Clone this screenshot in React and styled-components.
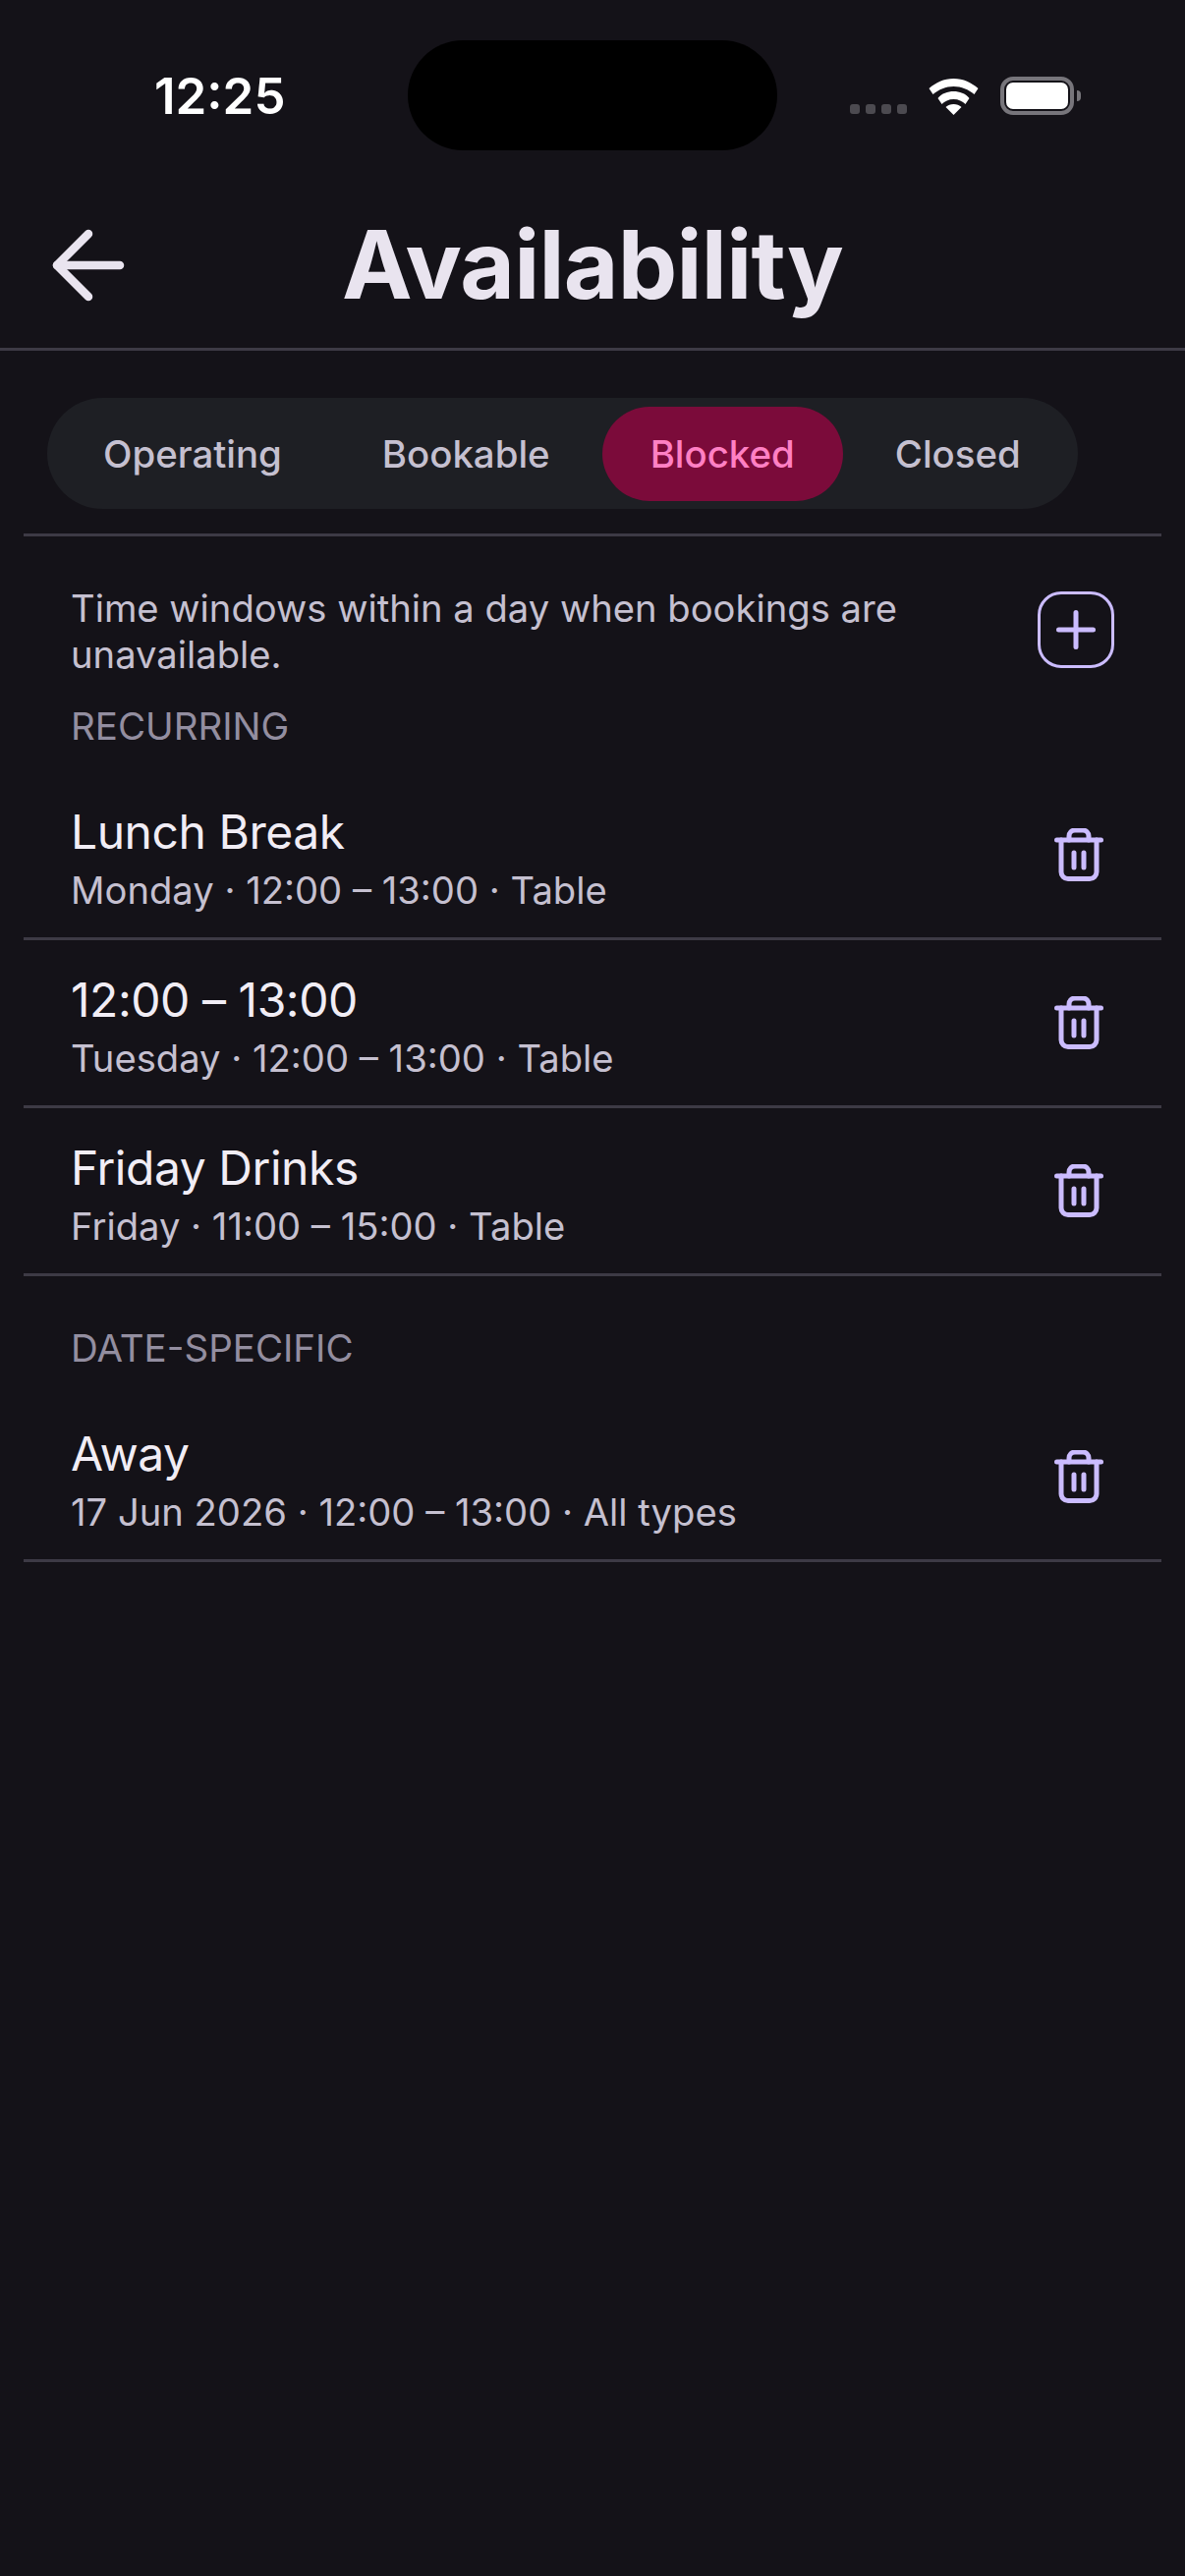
import React from "react";
import styled, { createGlobalStyle } from "styled-components";

const GlobalStyle = createGlobalStyle`
  html, body {
    margin: 0;
    padding: 0;
    background: #141218;
  }
  * {
    box-sizing: border-box;
  }
`;

const tabs = ["Operating", "Bookable", "Blocked", "Closed"];

const recurring = [
  { title: "Lunch Break", sub: "Monday · 12:00 – 13:00 · Table" },
  { title: "12:00 – 13:00", sub: "Tuesday · 12:00 – 13:00 · Table" },
  { title: "Friday Drinks", sub: "Friday · 11:00 – 15:00 · Table" },
];

const dated = [{ title: "Away", sub: "17 Jun 2026 · 12:00 – 13:00 · All types" }];

const TrashIcon = () => (
  <svg width="50" height="54" viewBox="0 0 50 54" fill="none" stroke="#cbbcff" strokeWidth="5" strokeLinecap="round" strokeLinejoin="round">
    <path d="M2.500 12h45" />
    <path d="M15 12V8a6 6 0 0 1 6-6h8a6 6 0 0 1 6 6v4" />
    <path d="M7 12v32.500a7 7 0 0 0 7 7h22a7 7 0 0 0 7-7V12" />
    <path d="M20 25v15M30 25v15" />
  </svg>
);

const Row = ({ title, sub }) => (
  <ItemRow>
    <ItemText>
      <ItemTitle>{title}</ItemTitle>
      <ItemSub>{sub}</ItemSub>
    </ItemText>
    <TrashIcon />
  </ItemRow>
);

const App = () => {
  return (
    <Page>
      <GlobalStyle />
      <StatusBar>
        <Clock>12:25</Clock>
        <Island />
        <StatusIcons>
          <Signal>
            <i />
            <i />
            <i />
            <i />
          </Signal>
          <svg width="51" height="37" viewBox="0 0 50 37" fill="#fff">
            <path d="M25 0C15 0 7 4 0 10l4 6c6-5 13-8 21-8s15 3 21 8l4-6C43 4 35 0 25 0z" />
            <path d="M25 13c-6 0-12 2-16 7l4 6c3-3 7-5 12-5s9 2 12 5l4-6c-4-5-10-7-16-7z" />
            <path d="M25 26c-3 0-6 1-8 3l8 8 8-8c-2-2-5-3-8-3z" />
          </svg>
          <Battery>
            <BatteryFill />
          </Battery>
        </StatusIcons>
      </StatusBar>
      <Header>
        <BackButton>
          <svg width="80" height="80" viewBox="0 0 80 80" fill="none" stroke="#e9e4ef" strokeWidth="8.500" strokeLinecap="round" strokeLinejoin="round">
            <path d="M72 40H8" />
            <path d="M40 8L8 40l32 32" />
          </svg>
        </BackButton>
        <Title>Availability</Title>
      </Header>
      <TabsArea>
        <Tabs>
          {tabs.map((tab) => (
            <Tab key={tab} $active={tab === "Blocked"}>
              {tab}
            </Tab>
          ))}
        </Tabs>
      </TabsArea>
      <Intro>
        <Description>Time windows within a day when bookings are unavailable.</Description>
        <AddButton>
          <svg width="40" height="40" viewBox="0 0 40 40" fill="none" stroke="#cbbcff" strokeWidth="5" strokeLinecap="round">
            <path d="M20 2.500v35M2.500 20h35" />
          </svg>
        </AddButton>
      </Intro>
      <SectionLabel>RECURRING</SectionLabel>
      {recurring.map((item) => (
        <Row key={item.title} {...item} />
      ))}
      <SectionLabel $spaced>DATE-SPECIFIC</SectionLabel>
      {dated.map((item) => (
        <Row key={item.title} {...item} />
      ))}
    </Page>
  );
};

export default App;

const Page = styled.div`
  width: 1206px;
  height: 2622px;
  overflow: hidden;
  background: #141218;
  font-family: Inter, "Liberation Sans", sans-serif;
`;

const StatusBar = styled.div`
  position: relative;
  height: 194px;
`;

const Clock = styled.div`
  position: absolute;
  left: 157px;
  top: 69px;
  font-size: 51px;
  line-height: 58px;
  font-weight: 600;
  color: #fff;
`;

const Island = styled.div`
  position: absolute;
  left: 415px;
  top: 41px;
  width: 376px;
  height: 112px;
  border-radius: 56px;
  background: #000;
`;

const StatusIcons = styled.div`
  position: absolute;
  left: 865px;
  top: 78px;
  display: flex;
  align-items: flex-end;
  gap: 22px;
`;

const Signal = styled.div`
  display: flex;
  gap: 6px;
  padding-bottom: 1px;

  i {
    display: block;
    width: 10px;
    height: 10px;
    border-radius: 3px;
    background: #4c4a50;
  }
`;

const Battery = styled.div`
  position: relative;
  width: 75px;
  height: 39px;
  padding: 2px;
  border: 4px solid #77757b;
  border-radius: 13px;

  &::after {
    content: "";
    position: absolute;
    right: -11px;
    top: 10px;
    width: 4px;
    height: 11px;
    border-radius: 0 5px 5px 0;
    background: #77757b;
  }
`;

const BatteryFill = styled.div`
  width: 100%;
  height: 100%;
  border-radius: 7px;
  background: #fff;
`;

const Header = styled.div`
  position: relative;
  height: 163px;
  display: flex;
  align-items: center;
  justify-content: center;
  border-bottom: 3px solid #3d3a45;
`;

const BackButton = styled.div`
  position: absolute;
  left: 50px;
  top: 36px;
  display: flex;
`;

const Title = styled.h1`
  margin: 0 0 10px;
  font-size: 96px;
  line-height: 110px;
  font-weight: 700;
  letter-spacing: -0.75px;
  color: #e9e4ef;
`;

const TabsArea = styled.div`
  margin: 0 24px;
  padding: 48px 24px 25px;
  border-bottom: 3px solid #3d3a45;
`;

const Tabs = styled.div`
  width: 1049px;
  height: 113px;
  display: flex;
  align-items: center;
  gap: 4px;
  padding: 0 8px;
  border-radius: 57px;
  background: #1e1f24;
`;

const Tab = styled.div`
  height: 96px;
  padding: 0 49px;
  display: flex;
  align-items: center;
  border-radius: 48px;
  font-size: 38.4px;
  font-weight: 500;
  color: ${(p) => (p.$active ? "#ff80c4" : "#c5c0d0")};
  background: ${(p) => (p.$active ? "#7b0b3a" : "transparent")};
`;

const Intro = styled.div`
  display: flex;
  justify-content: space-between;
  align-items: flex-start;
  padding: 50px 72px 0;
`;

const Description = styled.p`
  margin: 0;
  width: 900px;
  font-size: 38.2px;
  line-height: 47px;
  color: #c5c0d0;
`;

const AddButton = styled.div`
  width: 78px;
  height: 78px;
  flex: none;
  margin-top: 6px;
  display: flex;
  align-items: center;
  justify-content: center;
  border: 3.5px solid #cbbcff;
  border-radius: 24px;
`;

const SectionLabel = styled.div`
  margin: ${(p) => (p.$spaced ? "51px" : "27px")} 72px 25px;
  font-size: 38.5px;
  line-height: 44px;
  color: #938ea0;
`;

const ItemRow = styled.div`
  height: 171px;
  margin: 0 24px;
  padding: 0 59px 0 48px;
  display: flex;
  justify-content: space-between;
  align-items: center;
  border-bottom: 3px solid #3d3a45;

  svg {
    flex: none;
  }
`;

const ItemText = styled.div`
  display: flex;
  flex-direction: column;
  gap: 4px;
  padding-top: 8px;
`;

const ItemTitle = styled.div`
  font-size: 48px;
  line-height: 60px;
  letter-spacing: -0.45px;
  color: #f1edf5;
`;

const ItemSub = styled.div`
  font-size: 38.2px;
  line-height: 50px;
  color: #c5c0d0;
`;
